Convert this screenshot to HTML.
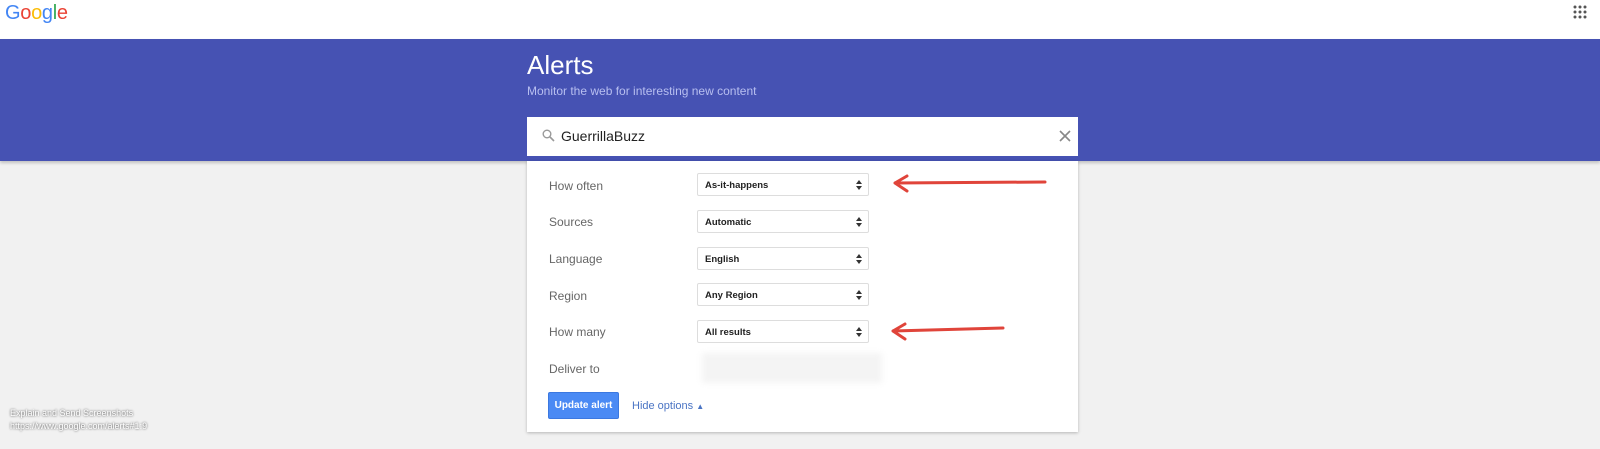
<!DOCTYPE html>
<html><head><style>
body{margin:0;width:1600px;height:449px;background:#f1f1f1;font-family:"Liberation Sans",sans-serif;position:relative;overflow:hidden}
.top{position:absolute;left:0;top:0;width:1600px;height:39px;background:#fff}
.logo{position:absolute;left:5px;top:2px;font-size:20px;letter-spacing:-0.3px}
.banner{position:absolute;left:0;top:39px;width:1600px;height:122px;background:#4652b3;box-shadow:0 2px 3px rgba(0,0,0,.2)}
h1{position:absolute;left:527px;top:50px;margin:0;color:#fff;font-weight:normal;font-size:26px}
.sub{position:absolute;left:527px;top:84px;color:#b8bff0;font-size:12px}
.search{position:absolute;left:527px;top:117px;width:551px;height:39px;background:#fff}
.search span{position:absolute;left:34px;top:11px;font-size:14px;color:#222}
.card{position:absolute;left:527px;top:161px;width:551px;height:271px;background:#fff;box-shadow:0 1px 3px rgba(0,0,0,.25)}
.lab{position:absolute;left:22px;font-size:12px;color:#666}
.sel{position:absolute;left:170px;width:172px;height:23px;border:1px solid #ddd;border-radius:2px;font-size:9.5px;font-weight:bold;color:#222;box-sizing:border-box;padding:6px 0 0 7px}
.sel:after{content:"";position:absolute;right:6px;top:6px;width:0;height:0;border-left:3px solid transparent;border-right:3px solid transparent;border-bottom:4px solid #333;}
.sel:before{content:"";position:absolute;right:6px;top:12px;width:0;height:0;border-left:3px solid transparent;border-right:3px solid transparent;border-top:4px solid #333;}
.btn{position:absolute;left:21px;top:231px;width:71px;height:27px;background:#4a8af4;border:1px solid #3b78e0;box-sizing:border-box;color:#fff;font-size:10px;font-weight:bold;text-align:center;line-height:25px;border-radius:2px}
.hide{position:absolute;left:105px;top:239px;font-size:11px;color:#4a74c4}
.blur{position:absolute;left:175px;top:192px;width:180px;height:30px;background:#f4f4f4;filter:blur(3px)}
.foot{position:absolute;left:10px;font-size:9px;color:#fff;text-shadow:0 0 2px #333}
</style></head><body>
<div class="top"><div class="logo"><span style="color:#4285f4">G</span><span style="color:#ea4335">o</span><span style="color:#fbbc05">o</span><span style="color:#4285f4">g</span><span style="color:#34a853">l</span><span style="color:#ea4335">e</span></div>
<svg style="position:absolute;left:1573px;top:5px" width="14" height="14"><g fill="#555"><circle cx="2" cy="2" r="1.5"/><circle cx="7" cy="2" r="1.5"/><circle cx="12" cy="2" r="1.5"/><circle cx="2" cy="7" r="1.5"/><circle cx="7" cy="7" r="1.5"/><circle cx="12" cy="7" r="1.5"/><circle cx="2" cy="12" r="1.5"/><circle cx="7" cy="12" r="1.5"/><circle cx="12" cy="12" r="1.5"/></g></svg></div>
<div class="banner"></div>
<h1>Alerts</h1>
<div class="sub">Monitor the web for interesting new content</div>
<div class="search"><svg style="position:absolute;left:15px;top:12px" width="13" height="13"><circle cx="5" cy="5" r="3.8" fill="none" stroke="#999" stroke-width="1.4"/><path d="M8 8l4 4" stroke="#999" stroke-width="1.6"/></svg><span>GuerrillaBuzz</span>
<svg style="position:absolute;left:532px;top:13px" width="12" height="12"><path d="M1 1l10 10M11 1L1 11" stroke="#888" stroke-width="1.6"/></svg></div>
<div class="card">
<div class="lab" style="top:18px">How often</div><div class="sel" style="top:12px">As-it-happens</div>
<div class="lab" style="top:54px">Sources</div><div class="sel" style="top:49px">Automatic</div>
<div class="lab" style="top:91px">Language</div><div class="sel" style="top:86px">English</div>
<div class="lab" style="top:128px">Region</div><div class="sel" style="top:122px">Any Region</div>
<div class="lab" style="top:164px">How many</div><div class="sel" style="top:159px">All results</div>
<div class="lab" style="top:201px">Deliver to</div><div class="blur"></div>
<div class="btn">Update alert</div>
<div class="hide">Hide options <span style="font-size:8px">&#9650;</span></div>
</div>
<svg style="position:absolute;left:0;top:0" width="1600" height="449">
<g stroke="#e0443a" stroke-width="3" fill="none" stroke-linecap="round"><path d="M895 183L1045 182M895 183l12-7M895 183l12 8"/><path d="M893 331L1003 328M893 331l12-7M893 331l12 8"/></g></svg>
<div class="foot" style="top:408px">Explain and Send Screenshots</div>
<div class="foot" style="top:421px">https://www.google.com/alerts#1:9</div>
</body></html>
